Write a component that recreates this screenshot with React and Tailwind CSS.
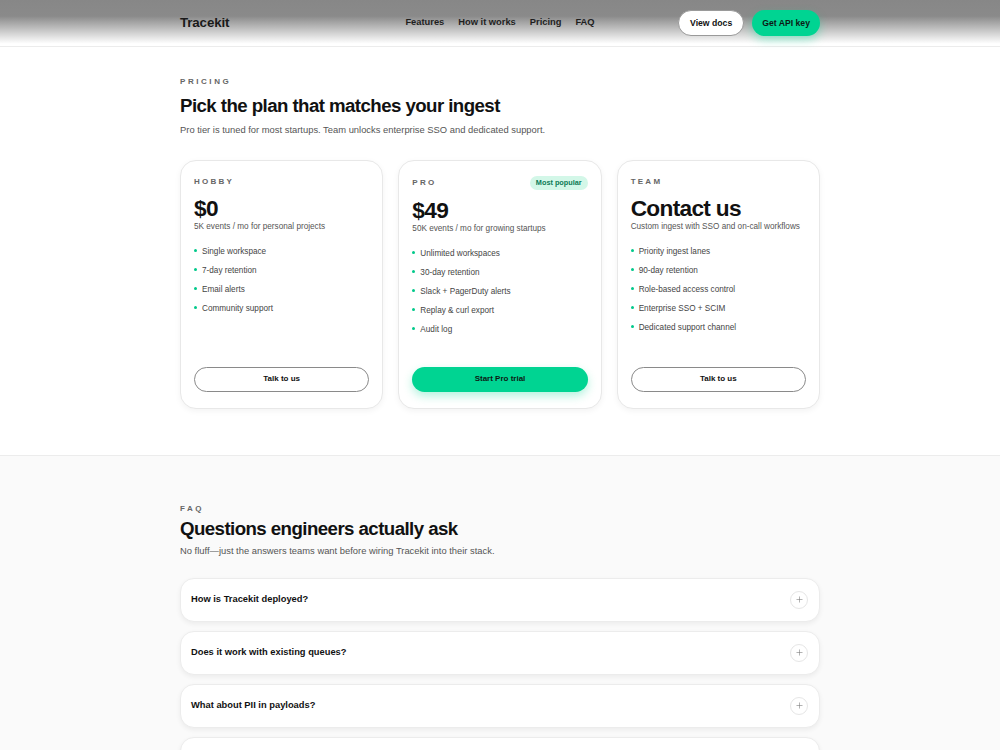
import { Plus } from "lucide-react";

// pricing tiers
const plans = [
  {
    name: "Hobby",
    price: "$0",
    blurb: "5K events / mo for personal projects",
    features: ["Single workspace", "7-day retention", "Email alerts", "Community support"],
    cta: "Talk to us",
  },
  {
    name: "Pro",
    price: "$49",
    blurb: "50K events / mo for growing startups",
    features: [
      "Unlimited workspaces",
      "30-day retention",
      "Slack + PagerDuty alerts",
      "Replay & curl export",
      "Audit log",
    ],
    cta: "Start Pro trial",
    popular: true,
  },
  {
    name: "Team",
    price: "Contact us",
    blurb: "Custom ingest with SSO and on-call workflows",
    features: [
      "Priority ingest lanes",
      "90-day retention",
      "Role-based access control",
      "Enterprise SSO + SCIM",
      "Dedicated support channel",
    ],
    cta: "Talk to us",
  },
];

const faqs = [
  "How is Tracekit deployed?",
  "Does it work with existing queues?",
  "What about PII in payloads?",
  "Can we self-host the collector?",
];

const PlanCard = ({ plan }) => (
  <div className="flex flex-col rounded-[16px] border border-[#e8e8e8] bg-white px-[13px] pt-[15px] pb-[16px] shadow-[0_2px_6px_rgba(0,0,0,0.05)]">
    {plan.popular ? (
      <div className="flex items-center justify-between h-[14px]">
        <span className="text-[8px] leading-[10px] font-bold uppercase tracking-[0.28em] text-[#666]">
          {plan.name}
        </span>
        <span className="rounded-full bg-[#d3f7e8] px-[6px] h-[14px] flex items-center text-[7.3px] font-bold text-[#0b7a55]">
          Most popular
        </span>
      </div>
    ) : (
      <div className="flex items-center h-[12px]">
        <span className="text-[8px] leading-[10px] font-bold uppercase tracking-[0.28em] text-[#666]">
          {plan.name}
        </span>
      </div>
    )}
    <div className="mt-[8px] text-[22.67px] leading-[24px] font-bold tracking-[-0.03em] text-[#111]">
      {plan.price}
    </div>
    <p className="mt-[1px] text-[8.2px] leading-[12px] text-[#555]">{plan.blurb}</p>

    <ul className="mt-[13px] flex flex-col gap-[7px]">
      {plan.features.map((f) => (
        <li key={f} className="flex items-center gap-[5px] text-[8.2px] leading-[12px] text-[#444]">
          <span className="w-[3px] h-[3px] -mt-[3px] rounded-full bg-[#00c98a]" />
          {f}
        </li>
      ))}
    </ul>

    <div className="mt-auto pt-[28px]">
      {plan.popular ? (
        <button className="w-full h-[25px] rounded-full bg-[#00d492] text-[8px] font-bold text-[#0c1a14] shadow-[0_4px_10px_rgba(0,212,146,0.3)]">
          {plan.cta}
        </button>
      ) : (
        <button className="w-full h-[25px] rounded-full border border-[#8a8a8a] bg-white text-[8px] font-bold text-[#111]">
          {plan.cta}
        </button>
      )}
    </div>
  </div>
);

export default function App() {
  return (
    <div className="min-h-screen bg-white font-['Liberation_Sans',Arial,sans-serif] text-[#111]">
      {/* top bar */}
      <header className="h-[47px] border-b border-[#ececec] bg-[linear-gradient(to_bottom,#878787_0%,#8a8a8a_35%,#ffffff_95%)]">
        <div className="max-w-[640px] mx-auto h-full grid grid-cols-[1fr_auto_1fr] items-center">
          <a className="text-[13.33px] font-bold tracking-[-0.01em] text-[#1a1a1a]">Tracekit</a>
          <nav className="flex items-center gap-[14px] text-[9.33px] font-semibold text-[#1f1f1f]">
            <a>Features</a>
            <a>How it works</a>
            <a>Pricing</a>
            <a>FAQ</a>
          </nav>
          <div className="flex items-center justify-end gap-[8px]">
            <button className="h-[26px] px-[11px] rounded-full border border-[#9a9a9a] bg-white text-[8.67px] font-bold text-[#111]">
              View docs
            </button>
            <button className="h-[26px] px-[10px] rounded-full bg-[#00d492] text-[8.67px] font-bold text-[#0c1a14] shadow-[0_4px_10px_rgba(0,212,146,0.35)]">
              Get API key
            </button>
          </div>
        </div>
      </header>

      {/* pricing */}
      <section className="pt-[30px] pb-[46px]">
        <div className="max-w-[640px] mx-auto">
          <p className="text-[8px] leading-[10px] font-bold uppercase tracking-[0.32em] text-[#666]">Pricing</p>
          <h2 className="mt-[7px] text-[18.67px] leading-[24px] font-bold tracking-[-0.03em] text-[#111]">
            Pick the plan that matches your ingest
          </h2>
          <p className="mt-[5px] text-[9.4px] leading-[14px] text-[#555]">
            Pro tier is tuned for most startups. Team unlocks enterprise SSO and dedicated support.
          </p>

          <div className="mt-[23px] grid grid-cols-3 gap-[15px]">
            {plans.map((p) => (
              <PlanCard key={p.name} plan={p} />
            ))}
          </div>
        </div>
      </section>

      {/* faq */}
      <section className="border-t border-[#ececec] bg-[#fafafa] pt-[48px] pb-[40px]">
        <div className="max-w-[640px] mx-auto">
          <p className="text-[8px] leading-[10px] font-bold uppercase tracking-[0.32em] text-[#666]">FAQ</p>
          <h2 className="mt-[3px] text-[18.67px] leading-[24px] font-bold tracking-[-0.03em] text-[#111]">
            Questions engineers actually ask
          </h2>
          <p className="mt-[3px] text-[9.4px] leading-[14px] text-[#555]">
            No fluff—just the answers teams want before wiring Tracekit into their stack.
          </p>

          <div className="mt-[20px] flex flex-col gap-[9px]">
            {faqs.map((q) => (
              <div
                key={q}
                className="h-[44px] flex items-center justify-between rounded-[14px] border border-[#ececec] bg-white pl-[10px] pr-[11px] shadow-[0_2px_5px_rgba(0,0,0,0.06)]"
              >
                <span className="text-[9.33px] font-bold text-[#111]">{q}</span>
                <span className="w-[18px] h-[18px] rounded-full border border-[#e6e6e6] flex items-center justify-center text-[#777]">
                  <Plus size={9} strokeWidth={1.5} />
                </span>
              </div>
            ))}
          </div>
        </div>
      </section>
    </div>
  );
}
